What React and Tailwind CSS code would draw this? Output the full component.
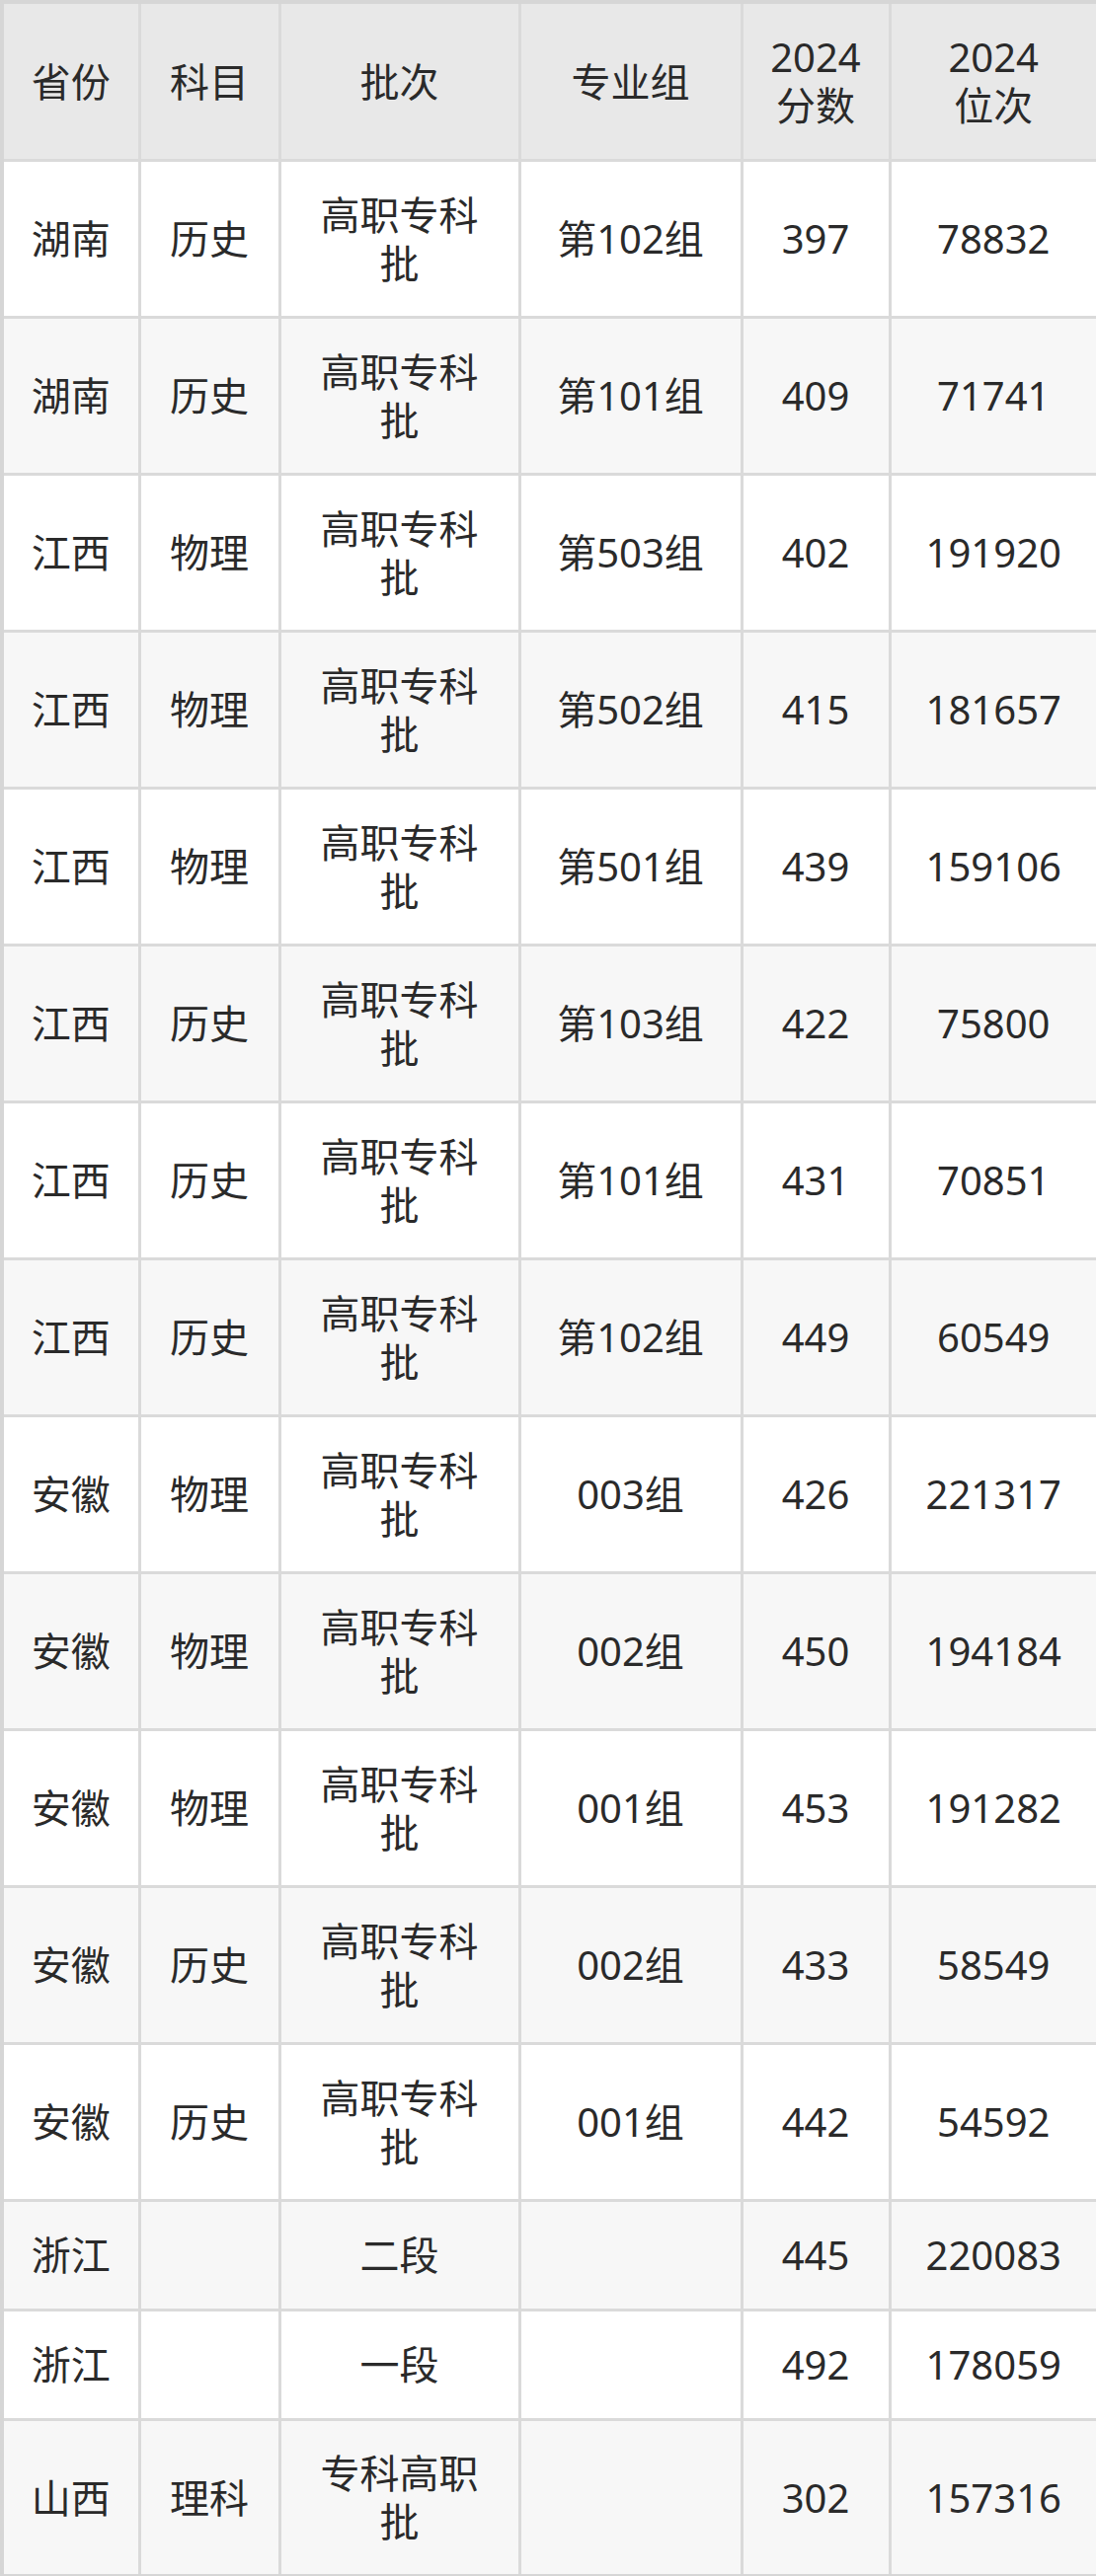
import React from "react";

const rows = [
  ["湖南", "历史", "高职专科|批", "第102组", "397", "78832"],
  ["湖南", "历史", "高职专科|批", "第101组", "409", "71741"],
  ["江西", "物理", "高职专科|批", "第503组", "402", "191920"],
  ["江西", "物理", "高职专科|批", "第502组", "415", "181657"],
  ["江西", "物理", "高职专科|批", "第501组", "439", "159106"],
  ["江西", "历史", "高职专科|批", "第103组", "422", "75800"],
  ["江西", "历史", "高职专科|批", "第101组", "431", "70851"],
  ["江西", "历史", "高职专科|批", "第102组", "449", "60549"],
  ["安徽", "物理", "高职专科|批", "003组", "426", "221317"],
  ["安徽", "物理", "高职专科|批", "002组", "450", "194184"],
  ["安徽", "物理", "高职专科|批", "001组", "453", "191282"],
  ["安徽", "历史", "高职专科|批", "002组", "433", "58549"],
  ["安徽", "历史", "高职专科|批", "001组", "442", "54592"],
  ["浙江", "", "二段", "", "445", "220083", "short"],
  ["浙江", "", "一段", "", "492", "178059", "short"],
  ["山西", "理科", "专科高职|批", "", "302", "157316"],
];

function Cell({ text }) {
  const parts = text.split("|");
  return (
    <td className="border-[3px] border-[#dadada] text-center align-middle p-0">
      {parts.map((p, i) => (
        <React.Fragment key={i}>
          {i > 0 && <br />}
          {p}
        </React.Fragment>
      ))}
    </td>
  );
}

export default function App() {
  const headers = ["省份", "科目", "批次", "专业组", "2024|分数", "2024|位次"];
  return (
    <div
      className="w-[1110px] bg-white text-[#2a2a2a] text-[40px] leading-[49px]"
      style={{ fontFamily: '"Noto Sans", "Noto Sans CJK SC", sans-serif' }}
    >
      <table className="w-[1110px] table-fixed border-collapse border-[4px] border-[#d6d6d6]">
        <colgroup>
          <col className="w-[139px]" />
          <col className="w-[142px]" />
          <col className="w-[243px]" />
          <col className="w-[225px]" />
          <col className="w-[150px]" />
          <col className="w-[211px]" />
        </colgroup>
        <thead>
          <tr className="h-[160px] bg-[#e8e8e8]">
            {headers.map((h, i) => (
              <Cell key={i} text={h} />
            ))}
          </tr>
        </thead>
        <tbody>
          {rows.map((r, idx) => (
            <tr
              key={idx}
              className={
                (r[6] === "short" ? "h-[111px] " : "h-[159px] ") +
                (idx % 2 === 1 ? "bg-[#f7f7f7]" : "bg-white")
              }
            >
              {r.slice(0, 6).map((c, i) => (
                <Cell key={i} text={c} />
              ))}
            </tr>
          ))}
        </tbody>
      </table>
    </div>
  );
}
